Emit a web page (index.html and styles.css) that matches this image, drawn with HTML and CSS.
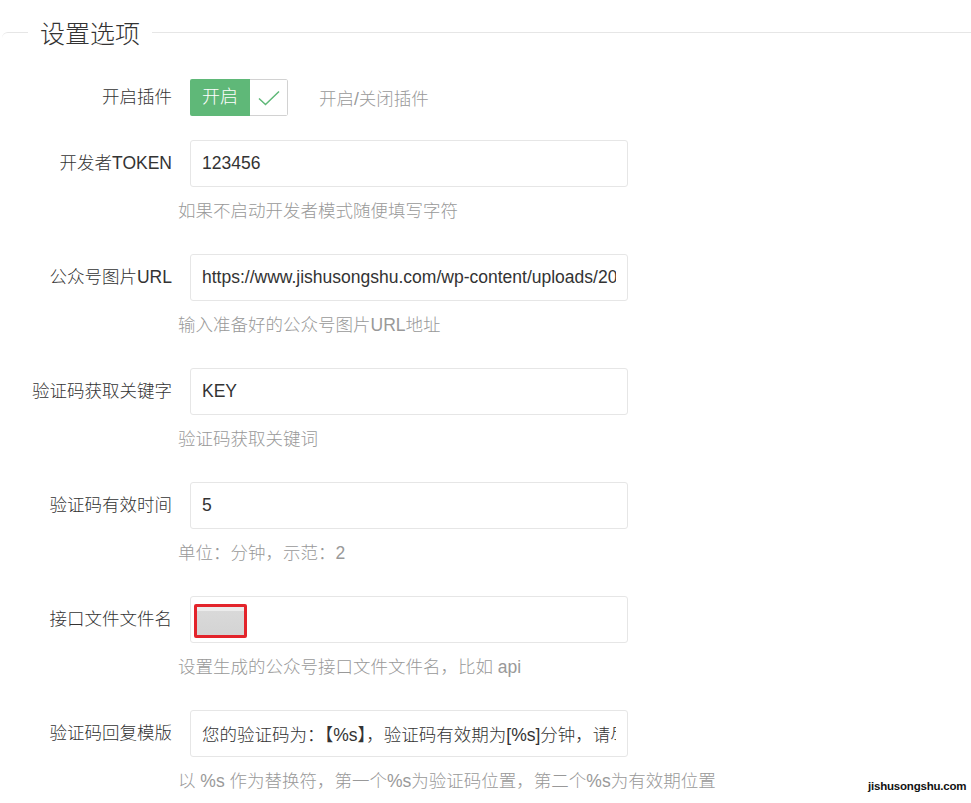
FILE: index.html
```html
<!DOCTYPE html>
<html lang="zh-CN">
<head>
<meta charset="utf-8">
<title>设置选项</title>
<link rel="stylesheet" href="styles.css">
</head>
<body>
<fieldset class="field">
  <legend class="legend">设置选项</legend>
  <form class="form">
    <div class="row row-switch">
      <label class="label">开启插件</label>
      <div class="control control-inline">
        <div class="checkbox">
          <span class="checkbox-text">开启</span>
          <span class="checkbox-icon">
            <svg width="24" height="18" viewBox="0 0 24 18"><path d="M2 9.5 L8.5 15.5 L22 2.5" fill="none" stroke="#5FB878" stroke-width="1.5"/></svg>
          </span>
        </div>
        <span class="aux-inline">开启/关闭插件</span>
      </div>
    </div>

    <div class="row">
      <label class="label">开发者TOKEN</label>
      <div class="control">
        <input class="input" type="text" value="123456">
        <div class="aux">如果不启动开发者模式随便填写字符</div>
      </div>
    </div>

    <div class="row">
      <label class="label">公众号图片URL</label>
      <div class="control">
        <input class="input" type="text" value="https://www.jishusongshu.com/wp-content/uploads/2020/06/qrcode.jpg">
        <div class="aux">输入准备好的公众号图片URL地址</div>
      </div>
    </div>

    <div class="row">
      <label class="label">验证码获取关键字</label>
      <div class="control">
        <input class="input" type="text" value="KEY">
        <div class="aux">验证码获取关键词</div>
      </div>
    </div>

    <div class="row">
      <label class="label">验证码有效时间</label>
      <div class="control">
        <input class="input" type="text" value="5">
        <div class="aux">单位：分钟，示范：2</div>
      </div>
    </div>

    <div class="row">
      <label class="label">接口文件文件名</label>
      <div class="control">
        <div class="input-wrap">
          <input class="input" type="text" value="">
          <span class="redact"></span>
        </div>
        <div class="aux">设置生成的公众号接口文件文件名，比如 api</div>
      </div>
    </div>

    <div class="row">
      <label class="label">验证码回复模版</label>
      <div class="control">
        <input class="input" type="text" value="您的验证码为：【%s】，验证码有效期为[%s]分钟，请尽快使用。">
        <div class="aux">以 %s 作为替换符，第一个%s为验证码位置，第二个%s为有效期位置</div>
      </div>
    </div>
  </form>
</fieldset>
<div class="watermark">jishusongshu.com</div>
</body>
</html>
```

FILE: styles.css
```css
html, body {
  margin: 0;
  padding: 0;
  background: #fff;
}
body {
  font-family: "Liberation Sans", Arial, "Noto Sans CJK SC", sans-serif;
  color: #333;
  font-size: 17.5px;
  font-weight: 300;
  width: 971px;
  height: 803px;
  overflow: hidden;
  position: relative;
}
.field {
  margin: 15px 0 0 2px;
  padding: 0;
  border: none;
  border-top: 1px solid #e6e6e6;
  border-top-left-radius: 6px;
  min-width: 0;
}
.legend {
  margin-left: 26px;
  padding: 0 12px;
  font-size: 25px;
  line-height: 35px;
  color: #333;
  font-family: "Noto Sans CJK SC", sans-serif;
  font-weight: 300;
}
.form {
  padding-top: 24px;
}
.row {
  display: flex;
  align-items: flex-start;
  margin-bottom: 30px;
}
.row-switch {
  margin-bottom: 19px;
  height: 47px;
  align-items: center;
}
.label {
  width: 170px;
  padding-right: 18px;
  text-align: right;
  line-height: 47px;
  white-space: nowrap;
  color: #333;
}
.control {
  margin-left: 0;
}
.control-inline {
  display: flex;
  align-items: center;
}
.checkbox {
  display: flex;
  height: 37px;
  border-radius: 2px;
  overflow: hidden;
}
.checkbox-text {
  width: 60px;
  background: #5FB878;
  color: #fff;
  text-align: center;
  line-height: 37px;
  font-size: 18px;
}
.checkbox-icon {
  width: 37px;
  border: 1px solid #d2d2d2;
  border-left: none;
  border-radius: 0 2px 2px 0;
  display: flex;
  align-items: center;
  justify-content: center;
  background: #fff;
}
.aux-inline {
  margin-left: 31px;
  color: #999;
}
.input {
  display: block;
  box-sizing: border-box;
  width: 438px;
  height: 47px;
  padding: 0 11px;
  border: 1px solid #e6e6e6;
  border-radius: 3px;
  font-family: "Liberation Sans", Arial, "Noto Sans CJK SC", sans-serif;
  font-size: 17.5px;
  font-weight: 300;
  color: #333;
  background: #fff;
  outline: none;
}
.input-wrap {
  position: relative;
}
.redact {
  position: absolute;
  left: 4px;
  top: 8px;
  width: 47px;
  height: 28px;
  border: 3px solid #e3242b;
  border-radius: 2px;
  background: linear-gradient(to bottom, #ececec 0, #ececec 4px, #d9d9d9 4px, #d4d4d4 100%);
}
.aux {
  margin-top: 11px;
  margin-left: -12px;
  line-height: 26px;
  color: #999;
  white-space: nowrap;
}
.watermark {
  position: absolute;
  left: 868px;
  top: 780px;
  font-family: "Liberation Sans", Arial, sans-serif;
  font-weight: bold;
  font-size: 11.5px;
  color: #111;
  letter-spacing: -0.2px;
}
```
